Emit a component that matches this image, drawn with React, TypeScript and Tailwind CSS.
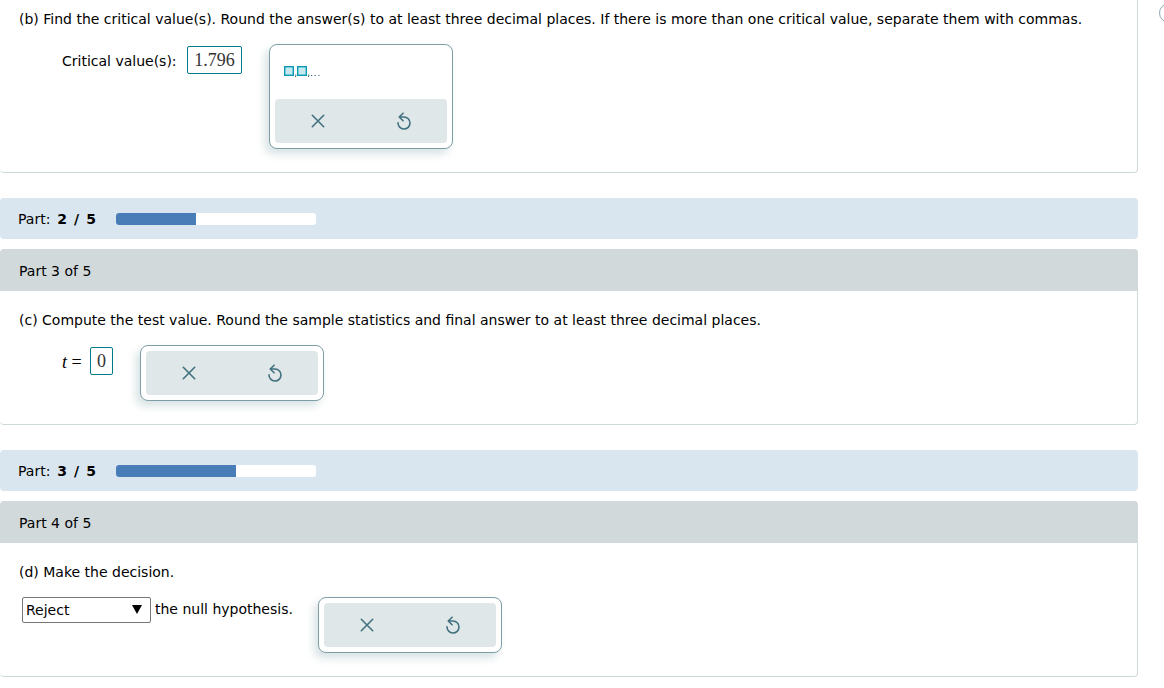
import { useState, type ReactNode } from "react";

function Palette({ onClear, onReset, label, children }: { onClear: () => void; onReset: () => void; label: string; children?: ReactNode }) {
  return (
    <div
      role="group"
      aria-label={label}
      className="w-[184px] shrink-0 rounded-lg border border-[#7d9ea6] bg-white p-[5px] shadow-[-4px_5px_8px_rgba(60,110,120,0.2)]"
    >
      {children}
      <div className="flex h-11 rounded bg-[#dfe7e8] text-[#41717f]">
        <button type="button" aria-label="Clear" onClick={onClear} className="flex flex-1 items-center justify-center">
          <svg width="14" height="14" viewBox="0 0 14 14" fill="none" stroke="currentColor" strokeWidth="1.6" strokeLinecap="round">
            <path d="M1.3 1.3L12.7 12.7M12.7 1.3L1.3 12.7" />
          </svg>
        </button>
        <button type="button" aria-label="Undo" onClick={onReset} className="flex flex-1 items-center justify-center">
          <svg width="16" height="18" viewBox="0 0 16 18" fill="none" stroke="currentColor" strokeWidth="1.6" strokeLinecap="round" strokeLinejoin="round">
            <path d="M2 10.8A6 6 0 1 0 8 5H3.2M7.1 1.2L3.2 5L7.1 8.8" />
          </svg>
        </button>
      </div>
    </div>
  );
}

function Progress({ done, total }: { done: number; total: number }) {
  return (
    <div className="flex h-[41px] items-center rounded bg-[#dae6ef] pl-[18px]">
      <div className="flex w-[98px] gap-[7px]">
        <span>Part:</span>
        <b>{done}</b>
        <b>/</b>
        <b>{total}</b>
      </div>
      <div
        role="progressbar"
        aria-label="Parts completed"
        aria-valuenow={done}
        aria-valuemin={0}
        aria-valuemax={total}
        className="h-3 w-[200px] overflow-hidden rounded-[3px] bg-white"
      >
        <div className="h-full bg-[#487db7]" style={{ width: `${(done / total) * 100}%` }} />
      </div>
    </div>
  );
}

function PartHeader({ children }: { children: ReactNode }) {
  return <h2 className="mt-[10px] flex h-[42px] items-center rounded-t bg-[#d1d9db] pt-0.5 pl-[19px]">{children}</h2>;
}

const body = "mb-[25px] rounded-b border-r border-b border-[#cfd9dc] pb-[23px]";
const field = "h-7 rounded-xs border border-[#007a8c] bg-white text-center font-['Liberation_Serif',serif] text-lg text-[#333] outline-none";

export default function App() {
  const [critical, setCritical] = useState("1.796");
  const [test, setTest] = useState("0");
  const [decision, setDecision] = useState("Reject");

  return (
    <div className="relative min-h-screen overflow-hidden bg-white font-['DejaVu_Sans',sans-serif] text-sm leading-5 text-black">
      <button type="button" aria-label="Help" className="absolute top-[3px] -right-[15px] size-5 rounded-full border border-[#8fa8b0]" />
      <main className="mr-[26px]">
        <section className={`${body} pt-[9px]`}>
          <p className="pl-[19px]">
            (b) Find the critical value(s). Round the answer(s) to at least three decimal places. If there is more than one critical value, separate them with commas.
          </p>
          <div className="mt-[15px] flex items-start pl-[62px]">
            <label htmlFor="critical" className="mt-[7px] w-[125px]">Critical value(s):</label>
            <input id="critical" value={critical} onChange={(e) => setCritical(e.target.value)} className={`${field} mt-[2px] mr-[27px] w-[55px]`} />
            <Palette label="Critical value tools" onClear={() => setCritical("")} onReset={() => setCritical("1.796")}>
              <button
                type="button"
                aria-label="List of values"
                onClick={() => setCritical(critical + ",")}
                className="mb-[7px] flex h-[42px] items-center pl-[9px] text-[#41717f]"
              >
                <svg width="38" height="14" viewBox="0 0 38 14">
                  <g fill="#c5e9ef" stroke="#0899b3" strokeWidth="1.4">
                    <rect x="0.7" y="2.7" width="8.6" height="8.6" />
                    <rect x="13.7" y="2.7" width="8.6" height="8.6" />
                  </g>
                  <g fill="none" stroke="currentColor" strokeWidth="1">
                    <path d="M11.8 10.5v1.5l-.6 1M24.8 10.5v1.5l-.6 1" />
                    <path d="M27 11.5h1.2M30.7 11.5h1.2M34.4 11.5h1.2" />
                  </g>
                </svg>
              </button>
            </Palette>
          </div>
        </section>

        <Progress done={2} total={5} />
        <PartHeader>Part 3 of 5</PartHeader>
        <section className={`${body} pt-[19px]`}>
          <p className="pl-[19px]">(c) Compute the test value. Round the sample statistics and final answer to at least three decimal places.</p>
          <div className="mt-[15px] flex items-start pl-[62px]">
            <label htmlFor="test" className="mt-[7px] w-7 font-['Liberation_Serif',serif] text-lg leading-5 whitespace-nowrap">
              <i>t</i> =
            </label>
            <input id="test" value={test} onChange={(e) => setTest(e.target.value)} className={`${field} mt-[2px] mr-[27px] w-[23px]`} />
            <Palette label="Test value tools" onClear={() => setTest("")} onReset={() => setTest("0")} />
          </div>
        </section>

        <Progress done={3} total={5} />
        <PartHeader>Part 4 of 5</PartHeader>
        <section className={`${body} pt-[19px]`}>
          <p className="pl-[19px]">(d) Make the decision.</p>
          <div className="mt-[15px] flex items-start pl-[22px]">
            <div className="relative">
              <select
                aria-label="Decision about the null hypothesis"
                value={decision}
                onChange={(e) => setDecision(e.target.value)}
                className="h-[26px] w-[129px] appearance-none rounded-xs border border-[#767676] bg-white pl-[3px]"
              >
                <option value="">(Choose one)</option>
                <option>Reject</option>
                <option>Do not reject</option>
              </select>
              <svg className="pointer-events-none absolute top-2 right-[9px]" width="10" height="9" viewBox="0 0 10 9">
                <path d="M0 0H10L5 9Z" />
              </svg>
            </div>
            <span className="mt-[2px] w-[167px] pl-1">the null hypothesis.</span>
            <Palette label="Decision tools" onClear={() => setDecision("")} onReset={() => setDecision("Reject")} />
          </div>
        </section>
      </main>
    </div>
  );
}
